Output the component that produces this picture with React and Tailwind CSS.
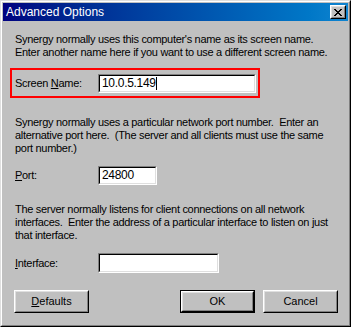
export default function App() {
  const font = { fontFamily: '"Liberation Sans", Arial, sans-serif' };
  const sunken =
    "border border-t-[#808080] border-l-[#808080] border-r-white border-b-white";
  const sunkenInner =
    "border border-t-black border-l-black border-r-[#dfdfdf] border-b-[#dfdfdf] bg-white h-full w-full";
  const Button = ({ children, isDefault }) => (
    <div
      className={
        "w-[75px] h-[23px] " +
        (isDefault ? "border border-black" : "")
      }
    >
      <div className="h-full w-full border border-t-white border-l-white border-r-black border-b-black">
        <div className="h-full w-full border border-t-[#dfdfdf] border-l-[#dfdfdf] border-r-[#808080] border-b-[#808080] flex items-center justify-center text-[11px] text-black">
          {children}
        </div>
      </div>
    </div>
  );
  return (
    <div
      className="w-[351px] h-[327px] bg-[#c0c0c0] border border-t-[#dfdfdf] border-l-[#dfdfdf] border-r-black border-b-black text-black"
      style={font}
    >
      <div className="h-full border border-t-white border-l-white border-r-[#808080] border-b-[#808080] p-px flex flex-col">
        {/* Title bar */}
        <div className="h-[18px] flex items-center justify-between bg-gradient-to-r from-[#000080] to-[#1084d0] pl-[3px] pr-[2px]">
          <span className="text-white text-[12px] leading-none">Advanced Options</span>
          <div className="w-[16px] h-[14px] border border-t-white border-l-white border-r-black border-b-black">
            <div className="w-full h-full bg-[#c0c0c0] border border-t-[#dfdfdf] border-l-[#dfdfdf] border-r-[#808080] border-b-[#808080] flex items-center justify-center">
              <svg width="8" height="7" viewBox="0 0 8 7" shapeRendering="crispEdges">
                <path
                  d="M0 0h2v1h-2zM6 0h2v1h-2zM1 1h2v1h-2zM5 1h2v1h-2zM2 2h4v1h-4zM3 3h2v1h-2zM2 4h4v1h-4zM1 5h2v1h-2zM5 5h2v1h-2zM0 6h2v1h-2zM6 6h2v1h-2z"
                  fill="black"
                />
              </svg>
            </div>
          </div>
        </div>

        {/* Content */}
        <div className="flex flex-col text-[11px] leading-[13px] tracking-[-0.3px] whitespace-nowrap">
          <p className="mt-[12px] pl-[12px]">
            Synergy normally uses this computer's name as its screen name.
            <br />
            Enter another name here if you want to use a different screen name.
          </p>

          <div className="mt-[9px] ml-[7px] w-[250px] h-[30px] border-2 border-[#ff0000] flex items-center pl-[3px]">
            <span className="w-[83px]">
              Screen <span className="underline">N</span>ame:
            </span>
            <div className={"w-[158px] h-[19px] " + sunken}>
              <div className={sunkenInner + " flex items-center pl-[2px] text-[12px]"}>
                <span>10.0.5.149</span>
                <span className="inline-block w-px h-[13px] bg-black" />
              </div>
            </div>
          </div>

          <p className="mt-[18px] pl-[12px]">
            Synergy normally uses a particular network port number.&nbsp; Enter an
            <br />
            alternative port here.&nbsp; (The server and all clients must use the same
            <br />
            port number.)
          </p>

          <div className="mt-[11px] pl-[12px] flex items-center">
            <span className="w-[83px]">
              <span className="underline">P</span>ort:
            </span>
            <div className={"w-[59px] h-[19px] " + sunken}>
              <div className={sunkenInner + " flex items-center pl-[2px] text-[12px]"}>
                24800
              </div>
            </div>
          </div>

          <p className="mt-[18px] pl-[12px]">
            The server normally listens for client connections on all network
            <br />
            interfaces.&nbsp; Enter the address of a particular interface to listen on just
            <br />
            that interface.
          </p>

          <div className="mt-[11px] pl-[12px] flex items-center">
            <span className="w-[83px]">
              <span className="underline">I</span>nterface:
            </span>
            <div className={"w-[121px] h-[20px] " + sunken}>
              <div className={sunkenInner} />
            </div>
          </div>

          <div className="mt-[17px] pl-[11px] flex items-center tracking-normal">
            <Button>
              <span className="underline">D</span>efaults
            </Button>
            <div className="ml-[91px]">
              <Button isDefault>OK</Button>
            </div>
            <div className="ml-[8px]">
              <Button>Cancel</Button>
            </div>
          </div>
        </div>
      </div>
    </div>
  );
}
